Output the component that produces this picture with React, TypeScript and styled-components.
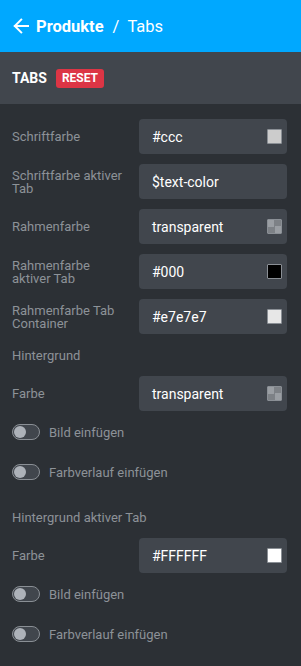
import styled, { createGlobalStyle } from "styled-components";

const GlobalStyle = createGlobalStyle`
  html, body {
    margin: 0;
    padding: 0;
    background: #2c3035;
  }
  body {
    font-family: Roboto, "Liberation Sans", sans-serif;
  }
`;

type ColorField = {
  label: string;
  value: string;
  swatch?: string;
};

const topFields: ColorField[] = [
  { label: "Schriftfarbe", value: "#ccc", swatch: "#cccccc" },
  { label: "Schriftfarbe aktiver Tab", value: "$text-color" },
  { label: "Rahmenfarbe", value: "transparent", swatch: "transparent" },
  { label: "Rahmenfarbe aktiver Tab", value: "#000", swatch: "#000000" },
  { label: "Rahmenfarbe Tab Container", value: "#e7e7e7", swatch: "#e7e7e7" },
];

const backgroundGroups = [
  { title: "Hintergrund", value: "transparent", swatch: "transparent" },
  { title: "Hintergrund aktiver Tab", value: "#FFFFFF", swatch: "#ffffff" },
];

const BackArrow = () => (
  <svg width="16" height="16" viewBox="0 0 16 16" fill="none">
    <path
      d="M15 8H1.8M8.2 1.6L1.8 8l6.4 6.4"
      stroke="#fff"
      strokeWidth="2"
      strokeLinecap="square"
    />
  </svg>
);

const Field = ({ label, value, swatch }: ColorField) => (
  <FieldRow>
    <FieldLabel>{label}</FieldLabel>
    <InputBox>
      <InputValue>{value}</InputValue>
      {swatch && <Swatch $color={swatch} />}
    </InputBox>
  </FieldRow>
);

const Toggle = ({ label }: { label: string }) => (
  <ToggleRow>
    <SwitchTrack>
      <SwitchKnob />
    </SwitchTrack>
    <ToggleLabel>{label}</ToggleLabel>
  </ToggleRow>
);

export default function App() {
  return (
    <>
      <GlobalStyle />
      <Page>
        <TopBar>
          <BackArrow />
          <Crumb>Produkte</Crumb>
          <Separator>/</Separator>
          <CrumbCurrent>Tabs</CrumbCurrent>
        </TopBar>
        <SectionBar>
          <SectionTitle>Tabs</SectionTitle>
          <ResetBadge>Reset</ResetBadge>
        </SectionBar>
        <Body>
          {topFields.map((f) => (
            <Field key={f.label} {...f} />
          ))}
          {backgroundGroups.map((g, i) => (
            <Group key={g.title}>
              <SubHeading $first={i === 0}>{g.title}</SubHeading>
              <Field label="Farbe" value={g.value} swatch={g.swatch} />
              <Toggle label="Bild einfügen" />
              <Toggle label="Farbverlauf einfügen" />
            </Group>
          ))}
        </Body>
      </Page>
    </>
  );
}

const Page = styled.div`
  width: 301px;
  min-height: 666px;
  background: #2c3035;
`;

const TopBar = styled.div`
  height: 52px;
  background: #00a8ff;
  display: flex;
  align-items: center;
  padding-left: 13px;
  color: #fff;
  font-size: 16.5px;
  box-sizing: border-box;
`;

const Crumb = styled.span`
  font-weight: 700;
  margin-left: 7px;
`;

const Separator = styled.span`
  margin: 0 8px 0 9px;
`;

const CrumbCurrent = styled.span`
  font-weight: 400;
`;

const SectionBar = styled.div`
  height: 52px;
  background: #41464d;
  display: flex;
  align-items: center;
  padding-left: 12px;
  gap: 9px;
`;

const SectionTitle = styled.span`
  color: #fff;
  font-weight: 700;
  font-size: 14px;
  text-transform: uppercase;
`;

const ResetBadge = styled.span`
  background: #dc3545;
  color: #fff;
  font-weight: 700;
  font-size: 12px;
  text-transform: uppercase;
  height: 19px;
  line-height: 19px;
  padding: 0 6px;
  border-radius: 3px;
`;

const Body = styled.div`
  display: flex;
  flex-direction: column;
  gap: 10px;
  padding: 15px 14px 20px 12px;
`;

const Group = styled.div`
  display: contents;
`;

const FieldRow = styled.div`
  display: grid;
  grid-template-columns: 115px 1fr;
  column-gap: 12px;
  align-items: center;
  height: 35px;
`;

const FieldLabel = styled.span`
  color: #8d9298;
  font-size: 13px;
  line-height: 13px;
`;

const InputBox = styled.div`
  height: 35px;
  background: #41464d;
  border-radius: 4px;
  display: flex;
  align-items: center;
  justify-content: space-between;
  padding: 0 5px 0 13px;
  box-sizing: border-box;
`;

const InputValue = styled.span`
  color: #fff;
  font-size: 14px;
`;

const Swatch = styled.span<{ $color: string }>`
  width: 13px;
  height: 13px;
  border: 1px solid #8a8f95;
  border-radius: 1px;
  background: ${(p) =>
    p.$color === "transparent"
      ? "conic-gradient(#7d8186 0 25%, #9a9ea3 0 50%, #7d8186 0 75%, #9a9ea3 0) 0 0 / 100% 100%"
      : p.$color};
`;

const SubHeading = styled.div<{ $first: boolean }>`
  height: 22px;
  display: flex;
  align-items: center;
  color: #8d9298;
  font-size: 13px;
  margin-top: ${(p) => (p.$first ? "0" : "9px")};
`;

const ToggleRow = styled.label`
  height: 30px;
  display: flex;
  align-items: center;
  gap: 9px;
  margin-top: -4px;
  &:last-child {
    margin-top: 0;
  }
`;

const SwitchTrack = styled.span`
  width: 28px;
  height: 16px;
  box-sizing: border-box;
  border: 1px solid #8a8f95;
  border-radius: 8px;
  background: #41464d;
  display: flex;
  align-items: center;
  padding-left: 1px;
`;

const SwitchKnob = styled.span`
  width: 12px;
  height: 12px;
  border-radius: 50%;
  background: #adb2b9;
`;

const ToggleLabel = styled.span`
  color: #8d9298;
  font-size: 13px;
`;
